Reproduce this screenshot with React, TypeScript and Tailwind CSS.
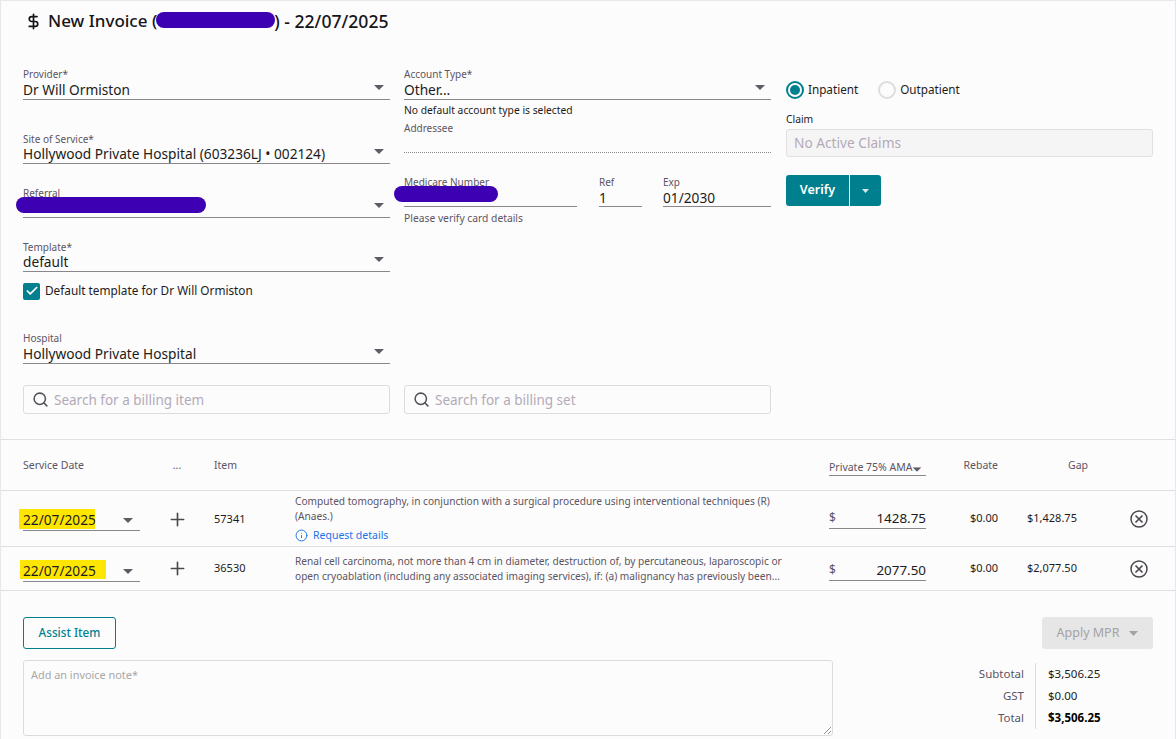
import { ReactNode } from 'react';
import { Check, DollarSign, Info, Plus, Search } from 'lucide-react';

function Caret({ className = '' }: { className?: string }) {
  return (
    <svg width="10" height="5" viewBox="0 0 10 5" className={className}>
      <path d="M0 0h10L5 5z" fill="#5f5a63" />
    </svg>
  );
}

function Redact({ className }: { className: string }) {
  return <div className={`absolute rounded-full bg-[#3d00b2] ${className}`} />;
}

function SelectField({ label, value, className = '', labelClass = '', children }: { label: string; value?: string; className?: string; labelClass?: string; children?: ReactNode }) {
  return (
    <div className={`relative ${className}`}>
      <div className={`h-[14px] text-[10px] leading-[14px] text-[#5c5463] ${labelClass}`}>{label}</div>
      <div className="flex h-[19px] items-center justify-between border-b border-[#8a878c] pr-[6px] pt-[1px] text-[13.7px] text-[#1d1b20]">
        <span className="whitespace-nowrap">{value}</span>
        <Caret className="mb-[7px]" />
      </div>
      {children}
    </div>
  );
}

function SearchBox({ placeholder }: { placeholder: string }) {
  return (
    <div className="flex h-[29px] items-center rounded-[3px] border border-[#dcdcdc] pl-[8px] text-[13.5px] text-[#b3aab8]">
      <Search size={17} strokeWidth={2.2} className="mr-[5px] text-[#55505a]" />
      <span className="pt-[2px]">{placeholder}</span>
    </div>
  );
}

const rows = [
  {
    item: '57341',
    desc: 'Computed tomography, in conjunction with a surgical procedure using interventional techniques (R) (Anaes.)',
    amount: '1428.75',
    gap: '$1,428.75',
    details: true,
    height: 'h-[56px]',
    mark: 'left-[-4px] top-[-1px] h-[20px] w-[76px]',
    dateGap: 'mb-[15px]',
    amountGap: 'mb-[17px]',
    plusGap: 'mt-[2px]',
  },
  {
    item: '36530',
    desc: 'Renal cell carcinoma, not more than 4 cm in diameter, destruction of, by percutaneous, laparoscopic or open cryoablation (including any associated imaging services), if: (a) malignancy has previously been...',
    amount: '2077.50',
    gap: '$2,077.50',
    details: false,
    height: 'h-[44px]',
    mark: 'left-[-3px] top-[-1px] h-[19px] w-[86px]',
    dateGap: 'mb-[8px]',
    amountGap: 'mb-[9px]',
    plusGap: '',
  },
];

export default function App() {
  return (
    <div className="h-[739px] w-[1176px] overflow-hidden border-x border-t border-x-[#e6e9ea] border-t-[#e6e9ea] bg-[#fcfcfc] font-['Noto_Sans',sans-serif] text-[#1d1b20]">
      <div className="relative flex h-[40px] items-center pl-[24px] text-[17px] font-medium text-[#17151a]">
        <DollarSign size={17} strokeWidth={2.4} className="mr-[6px]" />
        <span>New Invoice (</span>
        <span className="w-[117px]" />
        <span className="text-[17.6px]">) - 22/07/2025</span>
        <Redact className="left-[155px] top-[11px] h-[16px] w-[119px]" />
      </div>

      <div className="h-[399px] border-b border-[#e0e0e0] pl-[22px] pt-[26px]">
        <div className="grid grid-cols-[367px_367px_367px] gap-x-[14px]">
          <div>
            <SelectField label="Provider*" value="Dr Will Ormiston" />
            <SelectField label="Site of Service*" value="Hollywood Private Hospital (603236LJ • 002124)" className="mt-[31px]" labelClass="translate-y-px" />
            <SelectField label="Referral" value="" className="mt-[21px]" labelClass="translate-y-px">
              <Redact className="left-[-7px] top-[12px] h-[16px] w-[190px]" />
            </SelectField>
            <SelectField label="Template*" value="default" className="mt-[21px]" labelClass="translate-y-px" />
            <div className="mt-[10px] flex h-[18px] items-center text-[11.8px]">
              <div className="mr-[5px] flex h-[17px] w-[17px] items-center justify-center rounded-[2px] bg-[#00808f]">
                <Check size={14} strokeWidth={3} className="text-white" />
              </div>
              Default template for Dr Will Ormiston
            </div>
            <SelectField label="Hospital" value="Hollywood Private Hospital" className="mt-[31px]" />
          </div>

          <div>
            <SelectField label="Account Type*" value="Other..." />
            <div className="mt-[3px] h-[15px] text-[10.3px] leading-[15px]">No default account type is selected</div>
            <div className="mt-[3px] h-[14px] text-[10px] leading-[14px] text-[#5c5463]">Addressee</div>
            <div className="mt-[17px] border-b border-dotted border-[#8a878c]" />
            <div className="relative mt-[22px] flex h-[32px]">
              <div className="w-[173px] border-b border-[#8a878c]">
                <div className="h-[14px] text-[10px] leading-[14px] text-[#5c5463]">Medicare Number</div>
              </div>
              <div className="ml-[22px] w-[43px] border-b border-[#8a878c]">
                <div className="h-[14px] text-[10px] leading-[14px] text-[#5c5463]">Ref</div>
                <div className="h-[17px] text-[13.7px] leading-[17px]">1</div>
              </div>
              <div className="ml-[21px] w-[108px] border-b border-[#8a878c]">
                <div className="h-[14px] text-[10px] leading-[14px] text-[#5c5463]">Exp</div>
                <div className="h-[17px] text-[13.7px] leading-[17px]">01/2030</div>
              </div>
              <Redact className="left-[-10px] top-[11px] h-[16px] w-[104px]" />
            </div>
            <div className="mt-[4px] text-[10.3px] leading-[15px] text-[#5c5463]">Please verify card details</div>
          </div>

          <div className="-mr-[1px] ml-[1px]">
            <div className="mt-[14px] flex h-[18px] items-center text-[11.7px]">
              <div className="mr-[4px] flex h-[18px] w-[18px] items-center justify-center rounded-full border-2 border-[#00808f]">
                <div className="h-[10px] w-[10px] rounded-full bg-[#00808f]" />
              </div>
              Inpatient
              <div className="ml-[20px] mr-[4px] h-[18px] w-[18px] rounded-full border-2 border-[#dddddd]" />
              Outpatient
            </div>
            <div className="mt-[13px] h-[15px] text-[10.3px] leading-[15px]">Claim</div>
            <div className="mt-[2px] flex h-[28px] items-center rounded-[3px] border border-[#e0e0e0] bg-[#f5f5f5] pl-[7px] text-[13.7px] text-[#b3aab8]">
              No Active Claims
            </div>
            <div className="mt-[18px] flex h-[31px] w-[95px] rounded-[3px] bg-[#00808f] text-white">
              <div className="flex w-[64px] items-center justify-center border-r border-white text-[12.5px] font-semibold">Verify</div>
              <div className="flex flex-1 items-center justify-center">
                <svg width="7" height="4" viewBox="0 0 7 4"><path d="M0 0h7L3.5 4z" fill="#d5e8ea" /></svg>
              </div>
            </div>
          </div>
        </div>

        <div className="mt-[21px] grid grid-cols-[367px_367px] gap-x-[14px]">
          <SearchBox placeholder="Search for a billing item" />
          <SearchBox placeholder="Search for a billing set" />
        </div>
      </div>

      <div className="flex h-[51px] border-b border-[#e0e0e0] pl-[22px] text-[10.5px] text-[#5c5463]">
        <div className="w-[117px] pt-[18px]">Service Date</div>
        <div className="w-[74px] pt-[18px] text-center">...</div>
        <div className="w-[81px] pt-[18px]">Item</div>
        <div className="w-[534px]" />
        <div className="relative h-[36px] w-[97px] self-start border-b border-[#8a878c] pt-[20px]">
          Private 75% AMA
          <Caret className="absolute right-[4px] top-[27px] scale-[.9]" />
        </div>
        <div className="w-[72px] pt-[18px] text-right">Rebate</div>
        <div className="ml-[30px] w-[100px] pt-[18px] text-center">Gap</div>
      </div>

      {rows.map((row) => (
        <div key={row.item} className={`flex items-center border-b border-[#e0e0e0] pl-[22px] ${row.height}`}>
          <div className={`relative flex h-[21px] w-[117px] items-center justify-between self-end border-b border-[#8a878c] pr-[7px] text-[13.7px] ${row.dateGap}`}>
            <div className={`absolute bg-[#ffe600] ${row.mark}`} />
            <span className="relative">22/07/2025</span>
            <Caret className="relative" />
          </div>
          <div className={`flex w-[74px] justify-center ${row.plusGap}`}>
            <Plus size={21} strokeWidth={1.9} className="text-[#4d484f]" />
          </div>
          <div className={`w-[81px] text-[11px] ${row.plusGap}`}>{row.item}</div>
          <div className="w-[534px] pr-[28px] text-[10.15px] leading-[15px] text-[#5c5463]">
            <div className={row.details ? '-translate-y-px' : ''}>{row.desc}</div>
            {row.details && (
              <div className="mt-[3px] flex items-center text-[10.5px] text-[#1a73e8]">
                <Info size={13} strokeWidth={1.8} className="mr-[5px]" />
                Request details
              </div>
            )}
          </div>
          <div className={`flex h-[21px] w-[97px] items-center justify-between self-end border-b border-[#8a878c] text-[13.4px] ${row.amountGap}`}>
            <span className="text-[12px] text-[#5c5463]">$</span>
            <span>{row.amount}</span>
          </div>
          <div className="w-[72px] text-right text-[11px]">$0.00</div>
          <div className="ml-[29px] w-[100px] text-[11px]">{row.gap}</div>
          <svg width="18" height="18" viewBox="0 0 18 18" fill="none" stroke="#4d484f" strokeWidth="1.5" className="ml-[3px]">
            <circle cx="9" cy="9" r="8" />
            <path d="M5.5 5.5l7 7M12.5 5.5l-7 7" strokeWidth="1.7" />
          </svg>
        </div>
      ))}

      <div className="flex justify-between pl-[22px] pr-[22px] pt-[26px]">
        <div className="flex h-[32px] w-[93px] items-center justify-center rounded-[3px] border border-[#00808f] text-[11.7px] font-medium text-[#00808f]">
          Assist Item
        </div>
        <div className="flex h-[32px] w-[111px] items-center justify-center gap-[10px] rounded-[3px] bg-[#e6e6e6] text-[12.5px] text-[#a3a3a3]">
          Apply MPR
          <svg width="9" height="5" viewBox="0 0 9 5"><path d="M0 0h9L4.5 5z" fill="#a3a3a3" /></svg>
        </div>
      </div>

      <div className="mt-[11px] flex pl-[22px]">
        <div className="relative h-[76px] w-[810px] rounded-[3px] border border-[#dcdcdc] px-[7px] pt-[6px] text-[10.9px] text-[#a8a8a8]">
          Add an invoice note*
          <svg width="8" height="8" viewBox="0 0 8 8" className="absolute bottom-[1px] right-[1px]">
            <path d="M1 8l7-7M5 8l3-3" stroke="#777" strokeWidth="0.8" />
          </svg>
        </div>
        <div className="ml-[135px] mt-[3px] flex h-[66px] text-[11.5px] leading-[22px]">
          <div className="w-[68px] border-r border-[#dcdcdc] pr-[11px] text-right text-[#5c5463]">
            <div>Subtotal</div>
            <div>GST</div>
            <div>Total</div>
          </div>
          <div className="pl-[12px]">
            <div>$3,506.25</div>
            <div>$0.00</div>
            <div className="font-bold text-black">$3,506.25</div>
          </div>
        </div>
      </div>
    </div>
  );
}
